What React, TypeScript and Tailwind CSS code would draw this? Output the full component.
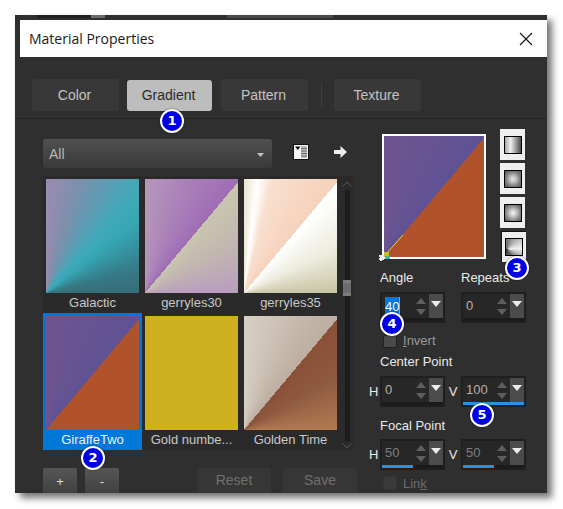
import React from "react";

const ARIAL = "font-['Liberation_Sans',Arial,sans-serif]";

function Badge({ n, cls }: { n: string; cls: string }) {
  return (
    <div className={`absolute w-6 h-6 rounded-full bg-[#0000e6] border-2 border-white shadow-[0_0_2px_rgba(0,0,0,0.6)] flex items-center justify-center text-white text-[13px] font-bold font-['DejaVu_Sans',sans-serif] ${cls}`}>
      {n}
    </div>
  );
}

function Tab({ label, active, w }: { label: string; active?: boolean; w: string }) {
  return (
    <div className={`${w} rounded-[3px] flex items-center justify-center pr-[2px] text-[14px] ${active ? "bg-[#bdbdbd] text-[#2a2a2a] h-[31px] mt-[1px] pb-[1px]" : "h-[32px] bg-[#383838] text-[#c4c4c4]"}`}>
      {label}
    </div>
  );
}

function Thumb({ label, cls, selected }: { label: string; cls: string; selected?: boolean }) {
  return (
    <div className={`w-[99px] flex flex-col items-center ${selected ? "bg-[#0078d7] text-[#f0f0f0]" : "text-[#c8c8c8]"}`}>
      <div className={`w-[93px] h-[114px] mt-[3px] ${cls}`} />
      <div className="h-[20px] leading-[20px] text-[13px]">{label}</div>
    </div>
  );
}

function Spin({ value, selected, dim, bar }: { value: string; selected?: boolean; dim?: boolean; bar?: string }) {
  return (
    <div className="w-[65px] h-[31px] bg-[#1f1f1f] p-[2px] pr-[2px] flex flex-col">
      <div className="flex-1 flex bg-[#272727]">
        <div className="flex-1 flex items-center pl-[3px]">
          {selected ? (
            <span className="bg-[#0078d7] text-white text-[13px] leading-[19px] w-[15px] h-[19px] border-r border-[#e08a40]">{value}</span>
          ) : (
            <span className={`text-[13px] ${dim ? "text-[#7d7d7d]" : "text-[#b8b0a4]"}`}>{value}</span>
          )}
        </div>
        <div className="w-[12px] mr-[2px] flex flex-col items-center justify-center gap-[5px]">
          <svg width="10" height="6" viewBox="0 0 10 6"><path d="M5 0 L10 6 L0 6 Z" fill="#5e5e5e" /></svg>
          <svg width="10" height="6" viewBox="0 0 10 6"><path d="M0 0 L10 0 L5 6 Z" fill="#5e5e5e" /></svg>
        </div>
        <div className="w-[14px] bg-[#4b4b4b] flex justify-center pt-[7px]">
          <svg width="10" height="6" viewBox="0 0 10 6"><path d="M0 0 L10 0 L5 6 Z" fill="#ececec" /></svg>
        </div>
      </div>
      <div className="h-[3px] bg-[#1b1b1b] flex">
        <div className={`h-full bg-[#2e8fe0] ${bar ?? "w-0"}`} />
      </div>
    </div>
  );
}

function SideBtn({ kind, cls = "" }: { kind: string; cls?: string }) {
  return (
    <div className={`w-[25px] h-[31px] bg-[#efefef] flex items-center justify-center ${cls}`}>
      <div className={`w-[18px] h-[18px] border border-black ${kind}`} />
    </div>
  );
}

export default function App() {
  return (
    <div className={`w-[563px] h-[509px] bg-white overflow-hidden pt-[15px] pl-[15px] ${ARIAL}`}>
      <div className="relative w-[532px] h-[478px] bg-[#2f2f2f] overflow-hidden shadow-[5px_5px_7px_rgba(0,0,0,0.55)]">
        {/* strip of the window behind */}
        <div className="h-[5px] ml-[22px] flex">
          <div className="w-[68px] h-[3px] bg-[#1f1f1f] flex justify-end"><div className="w-[14px] bg-[#6b6b6b]" /></div>
          <div className="ml-[122px] w-[106px] h-[3px] bg-[#4a4a4a]" />
        </div>
        {/* title */}
        <div className="ml-[5px] h-[37px] bg-white flex items-center justify-between pl-[9px] pr-[14px]">
          <span className="text-[14px] text-[#1a1a1a] font-['Open_Sans',sans-serif]">Material Properties</span>
          <svg width="14" height="14" viewBox="0 0 14 14" stroke="#111" strokeWidth="1.1"><path d="M1 1 L13 13 M13 1 L1 13" /></svg>
        </div>
        {/* tabs */}
        <div className="h-[62px] border-b border-[#242424] pl-[17px] pt-[22px] flex items-start">
          <Tab label="Color" w="w-[87px]" />
          <div className="ml-[8px]"><Tab label="Gradient" w="w-[85px]" active /></div>
          <div className="ml-[9px]"><Tab label="Pattern" w="w-[87px]" /></div>
          <div className="ml-[13px] mr-[12px] w-px h-[26px] mt-[3px] bg-[#3e3e3e]" />
          <Tab label="Texture" w="w-[87px]" />
        </div>
        {/* body */}
        <div className="flex">
          {/* left */}
          <div className="w-[347px] pl-[28px] pt-[20px]">
            <div className="flex items-center h-[29px]">
              <div className="w-[229px] h-[29px] rounded-[3px] bg-gradient-to-b from-[#505050] to-[#3a3a3a] flex items-center justify-between pl-[6px] pr-[8px] pt-[2px] text-[14px] text-[#b9b9b9]">
                All
                <svg width="7" height="4" viewBox="0 0 7 4"><path d="M0 0 L7 0 L3.5 4 Z" fill="#c4c4c4" /></svg>
              </div>
              <svg className="ml-[21px] -mt-[4px]" width="16" height="16" viewBox="0 0 16 16">
                <rect x="0.5" y="0.5" width="15" height="15" fill="#f6f6f6" stroke="#111" />
                <path d="M2 2.5 L7.5 2.5 L4.8 6 Z" fill="#111" />
                <rect x="8" y="2" width="6" height="12" fill="#bdbdbd" />
                <path d="M8 4.5 H14 M8 7 H14 M8 9.5 H14 M8 12 H14" stroke="#6a6a6a" />
              </svg>
              <svg className="ml-[25px] -mt-[4px]" width="13" height="12" viewBox="0 0 13 12">
                <path d="M0 4 H6.5 V0 L13 6 L6.5 12 V8 H0 Z" fill="#ededed" />
              </svg>
            </div>
            {/* gallery */}
            <div className="mt-[8px] w-[311px] h-[273px] bg-[#2a2a2a] flex">
              <div className="w-[297px] grid grid-cols-3 content-start">
                <Thumb label="Galactic" cls="bg-[conic-gradient(from_0deg_at_0%_100%,#9a8cb0_0deg,#7f8fac_15deg,#3fa9ba_42deg,#36a6b4_52deg,#357a86_75deg,#376d78_90deg)]" />
                <Thumb label="gerryles30" cls="bg-[conic-gradient(from_0deg_at_0%_100%,#b696bb_0deg,#9f6db6_40deg,#c9c5ae_40deg,#c2b7b0_60deg,#b99dbf_90deg)]" />
                <Thumb label="gerryles35" cls="bg-[conic-gradient(from_0deg_at_0%_100%,#e9e5cf_0deg,#ffffff_7deg,#f8dfcf_14deg,#f6d2bb_40deg,#ffffff_40deg,#ecebdc_65deg,#c8c5a4_90deg)]" />
                <Thumb label="GiraffeTwo" selected cls="bg-[conic-gradient(from_0deg_at_0%_100%,#6f5490_0deg,#5f5294_40deg,#b0522c_40deg,#b0522c_90deg)]" />
                <Thumb label="Gold numbe..." cls="bg-[#cfb020]" />
                <Thumb label="Golden Time" cls="bg-[conic-gradient(from_0deg_at_0%_100%,#d8d0c4_0deg,#bcaea0_40deg,#8a5038_40deg,#8f5a40_60deg,#b27a52_90deg)]" />
              </div>
              <div className="w-[14px] flex flex-col items-center relative">
                <svg className="mt-[5px]" width="10" height="6" viewBox="0 0 10 6" fill="none" stroke="#5a5a5a"><path d="M0.5 5.5 L5 1 L9.5 5.5" /></svg>
                <div className="w-[5px] h-[254px] mt-[3px] bg-[#1c1c1c]" />
                <div className="absolute left-[3px] top-[104px] w-[8px] h-[16px] bg-[#6e6e6e] border-y-[3px] border-[#7c7c7c]" />
                <svg className="mt-[2px]" width="10" height="6" viewBox="0 0 10 6" fill="none" stroke="#5a5a5a"><path d="M0.5 0.5 L5 5 L9.5 0.5" /></svg>
              </div>
            </div>
            {/* buttons */}
            <div className="mt-[19px] flex text-[13px]">
              <div className="w-[34px] h-[28px] rounded-[2px] bg-gradient-to-b from-[#565656] to-[#3e3e3e] text-[#dcdcdc] flex items-center justify-center">+</div>
              <div className="ml-[8px] w-[34px] h-[28px] rounded-[2px] bg-gradient-to-b from-[#565656] to-[#3e3e3e] text-[#dcdcdc] flex items-center justify-center">-</div>
              <div className="ml-[78px] w-[74px] h-[28px] rounded-[2px] bg-[#363636] text-[#707070] text-[14px] flex items-center justify-center pb-[4px]">Reset</div>
              <div className="ml-[12px] w-[74px] h-[28px] rounded-[2px] bg-[#363636] text-[#707070] text-[14px] flex items-center justify-center pb-[4px]">Save</div>
            </div>
          </div>
          {/* right */}
          <div className="flex-1 pl-[18px]">
            <div className="flex items-start">
              <div className="relative ml-[2px] mt-[15px] w-[104px] h-[125px] border-2 border-white bg-[conic-gradient(from_0deg_at_0%_100%,#6f5490_0deg,#5f5294_40deg,#b0522c_40deg,#b0522c_90deg)]">
                <svg className="absolute -left-[6px] -bottom-[5px]" width="30" height="30" viewBox="0 0 30 30" fill="none" shapeRendering="crispEdges">
                  <path d="M8 22 L25 3" stroke="#e8d820" shapeRendering="auto" />
                  <rect x="6" y="20" width="5" height="5" fill="#c8c020" />
                  <rect x="7" y="24" width="5" height="3" fill="#30c0b0" />
                  <path d="M1 24 h5 M1 27 h5 M3 23 v6" stroke="#e8e8e8" strokeWidth="2" />
                </svg>
              </div>
              <div className="ml-[14px] mt-[10px] flex flex-col gap-[3px]">
                <SideBtn kind="bg-[linear-gradient(90deg,#a8a8a8,#efefef_35%,#4a4a4a)]" />
                <SideBtn kind="bg-white shadow-[inset_0_0_6px_3px_#555]" />
                <SideBtn kind="bg-[radial-gradient(circle,#f2f2f2_5%,#555_95%)]" />
                <SideBtn kind="bg-[conic-gradient(from_0deg_at_10%_62%,#777_0deg,#f2f2f2_88deg,#666_150deg,#222_240deg,#111_268deg,#888_268deg,#777_360deg)]" cls="border-t border-l border-[#111] ml-[1px]" />
              </div>
            </div>
            <div className="mt-[7px] flex text-[13px] text-[#eaeaea] h-[17px] leading-[17px]">
              <div className="w-[81px]">Angle</div>
              <div>Repeats</div>
            </div>
            <div className="mt-[6px] flex gap-[16px]">
              <Spin value="40" selected />
              <Spin value="0" />
            </div>
            <div className="mt-[11px] flex items-center text-[13px] text-[#9a9a9a] h-[14px]">
              <div className="ml-[3px] w-[14px] h-[13px] rounded-[2px] bg-[#4a4a4a] border border-[#1f1f1f]" />
              <span className="ml-[6px]"><span className="underline">I</span>nvert</span>
            </div>
            <div className="mt-[5px] text-[13px] text-[#eaeaea] h-[17px] leading-[17px]">Center Point</div>
            <div className="mt-[6px] flex items-center text-[13px] text-[#eaeaea]">
              <span className="w-[11px] -ml-[11px]">H</span>
              <Spin value="0" />
              <span className="w-[16px] text-center">V</span>
              <Spin value="100" bar="w-full" />
            </div>
            <div className="mt-[10px] text-[13px] text-[#eaeaea] h-[17px] leading-[17px]">Focal Point</div>
            <div className="mt-[5px] flex items-center text-[13px] text-[#eaeaea]">
              <span className="w-[11px] -ml-[11px]">H</span>
              <Spin value="50" dim bar="w-1/2" />
              <span className="w-[16px] text-center">V</span>
              <Spin value="50" dim bar="w-1/2" />
            </div>
            <div className="mt-[6px] flex items-center text-[13px] text-[#6c6c6c] h-[14px]">
              <div className="ml-[3px] w-[14px] h-[14px] rounded-[2px] bg-[#3a3a3a] border border-[#333]" />
              <span className="ml-[6px] pt-[2px]">Lin<span className="underline">k</span></span>
            </div>
          </div>
        </div>
        {/* callouts */}
        <Badge n="1" cls="left-[145px] top-[94px]" />
        <Badge n="2" cls="left-[66px] top-[431px]" />
        <Badge n="3" cls="left-[490px] top-[241px]" />
        <Badge n="4" cls="left-[365px] top-[297px]" />
        <Badge n="5" cls="left-[455px] top-[388px]" />
      </div>
    </div>
  );
}
